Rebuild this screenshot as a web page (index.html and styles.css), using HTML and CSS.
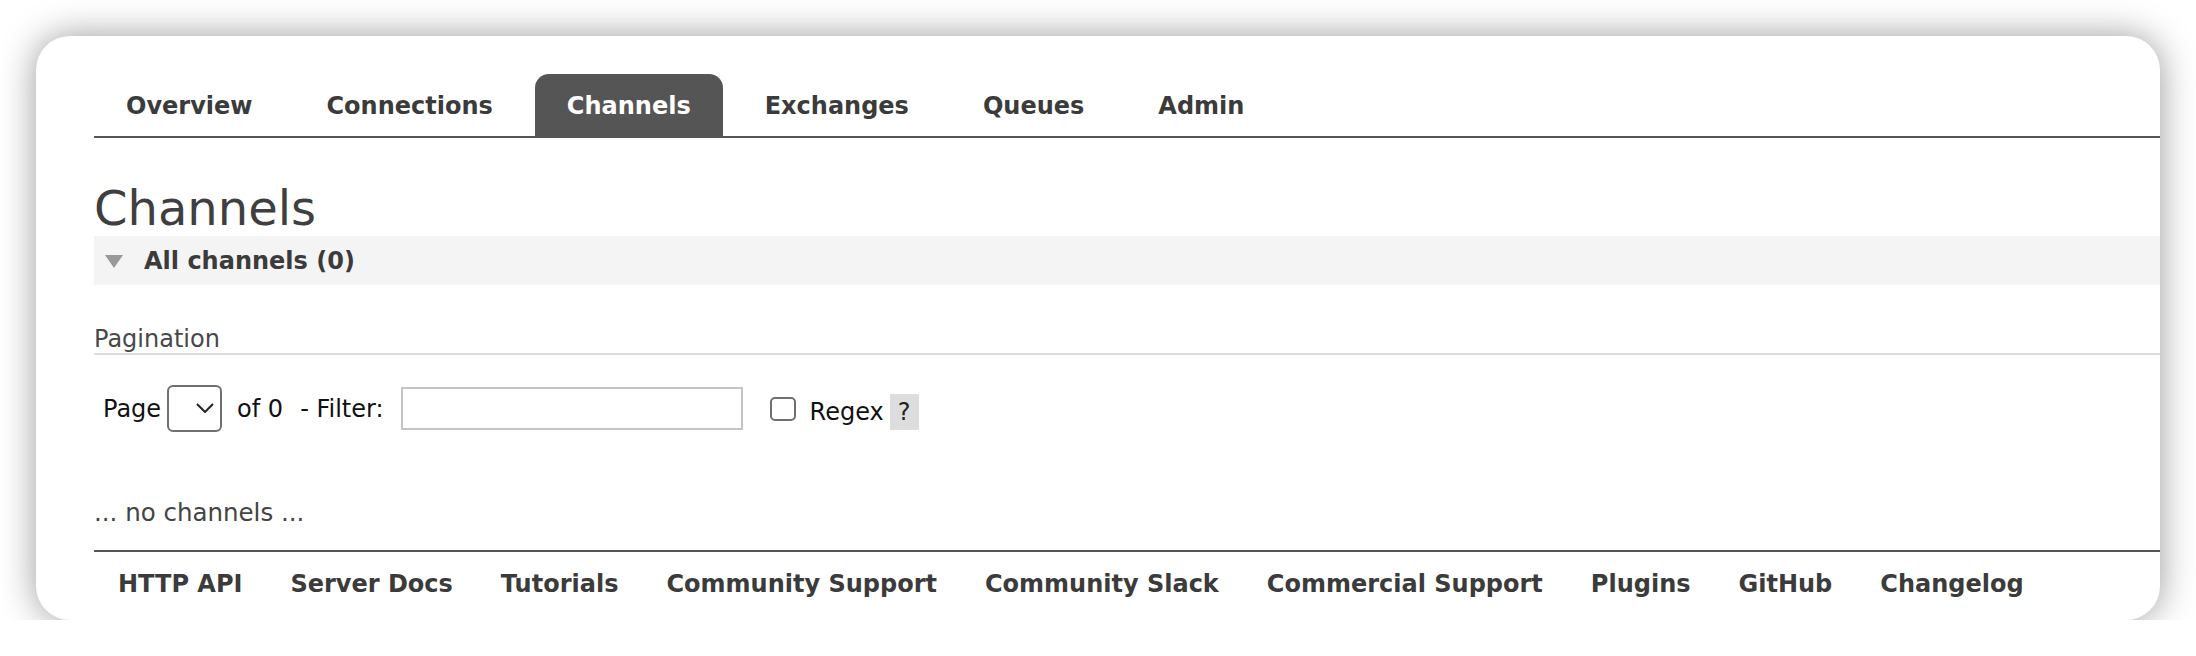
FILE: index.html
```html
<!DOCTYPE html>
<html>
<head>
<meta charset="utf-8">
<title>RabbitMQ Management - Channels</title>
<link rel="stylesheet" href="styles.css">
</head>
<body>
<div class="window">
  <div class="page">
    <ul class="tabs">
      <li><a class="tab">Overview</a></li>
      <li><a class="tab">Connections</a></li>
      <li><a class="tab selected">Channels</a></li>
      <li><a class="tab">Exchanges</a></li>
      <li><a class="tab">Queues</a></li>
      <li><a class="tab">Admin</a></li>
    </ul>

    <h1 class="title">Channels</h1>

    <div class="section">
      <h2 class="section-head">
        <svg class="tri" width="18" height="13" viewBox="0 0 18 13"><polygon points="0,0 18,0 9,13" fill="#999999"/></svg>
        <span>All channels (0)</span>
      </h2>
      <div class="section-body">
        <h3 class="pag-title">Pagination</h3>
        <div class="pag-row">
          <span class="lbl">Page</span>
          <span class="select-wrap">
            <select class="page-select"></select>
            <svg class="chev" width="18" height="10" viewBox="0 0 18 10"><polyline points="1,1 9,9 17,1" fill="none" stroke="#222" stroke-width="2"/></svg>
          </span>
          <span class="lbl of">of 0</span>
          <span class="lbl filter">- Filter:</span>
          <input class="filter-input" type="text">
          <input class="regex-check" type="checkbox">
          <span class="lbl regex">Regex</span>
          <span class="help">?</span>
        </div>
        <p class="empty">... no channels ...</p>
      </div>
    </div>

    <ul class="footer">
      <li><a class="flink">HTTP API</a></li>
      <li><a class="flink">Server Docs</a></li>
      <li><a class="flink">Tutorials</a></li>
      <li><a class="flink">Community Support</a></li>
      <li><a class="flink">Community Slack</a></li>
      <li><a class="flink">Commercial Support</a></li>
      <li><a class="flink">Plugins</a></li>
      <li><a class="flink">GitHub</a></li>
      <li><a class="flink">Changelog</a></li>
    </ul>
  </div>
</div>
</body>
</html>
```

FILE: styles.css
```css
html, body {
  margin: 0;
  padding: 0;
  background: #ffffff;
}

body {
  font-family: "DejaVu Sans", Verdana, sans-serif;
  color: #444444;
  padding: 36px 0 0 36px;
}

.window {
  width: 2124px;
  height: 584px;
  background: #ffffff;
  border-radius: 34px;
  box-shadow: 0 0 36px rgba(0, 0, 0, 0.4);
  overflow: hidden;
}

.page {
  padding: 38px 0 0 58px;
}

/* tabs */
.tabs {
  list-style: none;
  margin: 0;
  padding: 0;
  display: flex;
  gap: 10px;
  border-bottom: 2px solid #555555;
}

.tab {
  display: block;
  padding: 17px 32px 15px;
  font-size: 24px;
  line-height: 30px;
  font-weight: bold;
  color: #3b3b3b;
  border-radius: 14px 14px 0 0;
}

.tab.selected {
  background: #555555;
  color: #ffffff;
}

/* heading */
.title {
  margin: 42px 0 0;
  font-size: 48px;
  line-height: 56px;
  font-weight: normal;
  color: #3f3f3f;
}

/* section */
.section-head {
  margin: 0;
  display: flex;
  align-items: center;
  background: #f4f4f4;
  padding: 11px 0 9px 11px;
  font-size: 24px;
  line-height: 29px;
  font-weight: bold;
  color: #3b3b3b;
}

.tri {
  display: block;
  margin-right: 21px;
}

.pag-title {
  margin: 40px 0 0;
  font-size: 24px;
  line-height: 28px;
  font-weight: normal;
  color: #484848;
  border-bottom: 2px solid #dddddd;
}

.pag-row {
  margin-top: 30px;
  height: 47px;
  display: flex;
  align-items: center;
  padding-left: 9px;
}

.lbl {
  font-size: 24px;
  line-height: 28px;
  color: #111111;
}

.select-wrap {
  position: relative;
  display: block;
  width: 55px;
  height: 47px;
  margin-left: 6px;
}

.page-select {
  appearance: none;
  -webkit-appearance: none;
  display: block;
  box-sizing: border-box;
  width: 55px;
  height: 47px;
  margin: 0;
  border: 2px solid #707070;
  border-radius: 6px;
  background: #ffffff;
}

.chev {
  position: absolute;
  left: 29px;
  top: 18px;
}

.of {
  margin-left: 15px;
}

.filter {
  margin-left: 17px;
}

.filter-input {
  box-sizing: border-box;
  width: 342px;
  height: 43px;
  margin: 0 0 0 17px;
  border: 2px solid #c4c4c4;
  border-radius: 0;
  background: #ffffff;
  padding: 0 6px;
  outline: none;
}

.regex-check {
  appearance: none;
  -webkit-appearance: none;
  box-sizing: border-box;
  width: 26px;
  height: 24px;
  margin: 0 0 0 27px;
  border: 2px solid #707070;
  border-radius: 5px;
  background: #ffffff;
}

.regex {
  margin: 6px 0 0 14px;
}

.help {
  margin: 6px 0 0 6px;
  width: 29px;
  height: 36px;
  background: #dddddd;
  color: #222222;
  font-size: 24px;
  line-height: 36px;
  text-align: center;
}

.empty {
  margin: 67px 0 0;
  font-size: 24.5px;
  line-height: 28px;
  color: #444444;
}

/* footer */
.footer {
  list-style: none;
  margin: 23px 0 0;
  padding: 18px 0 0;
  display: flex;
  border-top: 2px solid #555555;
}

.flink {
  display: block;
  padding: 0 24px;
  font-size: 24px;
  line-height: 28px;
  font-weight: bold;
  color: #3b3b3b;
}
```
